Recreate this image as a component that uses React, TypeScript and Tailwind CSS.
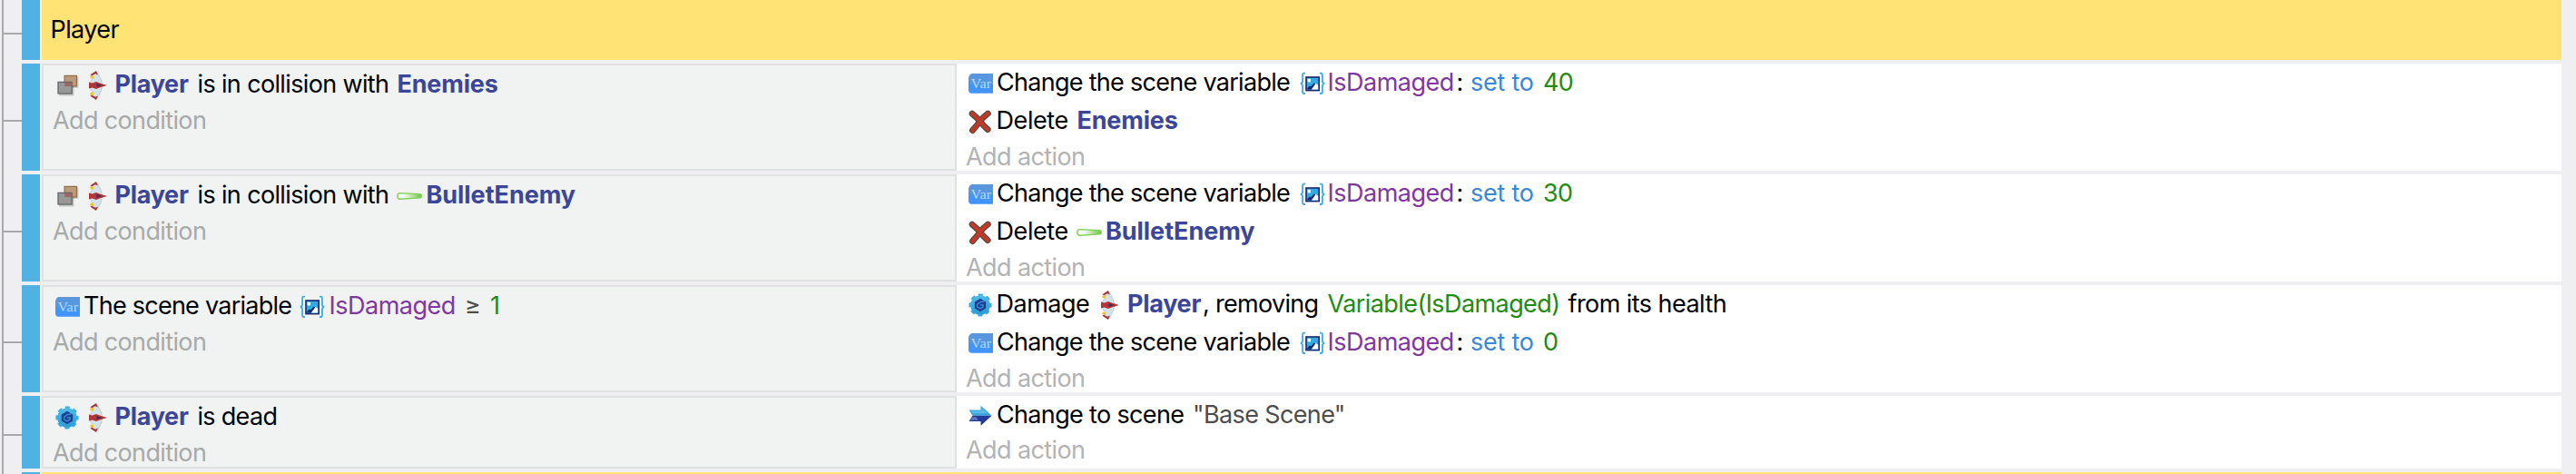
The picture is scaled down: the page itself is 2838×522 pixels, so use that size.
import type { ReactNode } from 'react';

function Text({ className, children }: { className: string; children: ReactNode }) {
  return <span className={`block shrink-0 pt-[2px] whitespace-pre ${className}`}>{children}</span>;
}

const BLACK = 'text-black';
const OBJECT = 'font-bold text-[#3c4698]';
const VARIABLE = 'text-[#8038a0]';
const NUMBER = 'text-[#228b10]';
const OPERATOR = 'text-[#3c87d4]';
const STRING = 'text-[#4d4d4d]';

function CollisionIcon() {
  return (
    <svg viewBox="0 0 28 28" className="mt-1 size-7 shrink-0">
      <rect x="12" y="4.5" width="14.5" height="12.5" fill="#000" opacity="0.14" />
      <rect x="5" y="11.5" width="16.5" height="14" fill="#000" opacity="0.18" />
      <rect x="11.1" y="3.4" width="13.4" height="11.6" fill="#bd9a77" stroke="#8e6c4b" strokeWidth="1.2" />
      <rect x="4" y="10.4" width="15.2" height="12.6" fill="#989898" stroke="#666" strokeWidth="1.3" />
      <rect x="11.3" y="11" width="7.4" height="4" fill="#9c6668" />
    </svg>
  );
}

function ShipIcon({ className }: { className: string }) {
  return (
    <svg viewBox="0 0 20 32" className={`mt-1 h-8 w-5 shrink-0 ${className}`}>
      <path d="M3 4.5 L9 1.5 L11.5 6 Q14 10 14.4 14 V18 Q14 22 11.5 26 L9 30.5 L3 27.5 L4.4 24 L1 19 V13 L4.4 8 Z" fill="#d3e2e8" stroke="#a3b3b9" strokeWidth="0.6" />
      <path d="M1.4 4.2 L8 0 L9.8 4.4 L7 3.2 L3.2 5.2 Z M1.4 27.8 L8 32 L9.8 27.6 L7 28.8 L3.2 26.8 Z" fill="#a6343a" />
      <path d="M1.2 5.4 L4.8 5 L5.4 8 L1.6 8.4 Z M1.2 26.6 L4.8 27 L5.4 24 L1.6 23.6 Z" fill="#f2c32e" />
      <path d="M0 12.6 L3.6 13.4 L8 12 L12.5 13.8 L20 16 L12.5 18.2 L8 20 L3.6 18.6 L0 19.4 Z" fill="#b0343a" />
      <path d="M8.5 14 L14.5 16 L8.5 18 Z" fill="#463052" />
    </svg>
  );
}

function VarIcon() {
  return (
    <svg viewBox="0 0 28 28" className="mt-1 size-7 shrink-0">
      <defs>
        <linearGradient id="var-fill" x1="0" y1="0" x2="0" y2="1">
          <stop offset="0" stopColor="#5b96db" />
          <stop offset="0.5" stopColor="#5299e3" />
          <stop offset="0.58" stopColor="#4496f5" />
          <stop offset="1" stopColor="#3f93fb" />
        </linearGradient>
      </defs>
      <path d="M4.5 3 H28 V24.7 H4.5 Q1 24.7 1 21 V8 Q1.6 4 4.5 3 Z" fill="url(#var-fill)" />
      <text x="3.6" y="18.8" textLength="22.5" lengthAdjust="spacingAndGlyphs" fontFamily="'Liberation Serif', serif" fontSize="15.5" letterSpacing="0" fill="#b9d5f6">
        Var
      </text>
    </svg>
  );
}

function SceneVariableIcon({ className }: { className: string }) {
  return (
    <svg viewBox="0 0 28 28" className={`mt-1 size-7 shrink-0 ${className}`}>
      <g fill="none" stroke="#38aee2" strokeWidth="1.8">
        <path d="M6 2.6 H4.6 Q3.1 2.6 3.1 4.6 V11 Q3.1 13.6 0.8 13.9 Q3.1 14.2 3.1 17 V23 Q3.1 25 4.6 25 H6" />
        <path d="M22 2.6 H23.4 Q24.9 2.6 24.9 4.6 V11 Q24.9 13.6 27.2 13.9 Q24.9 14.2 24.9 17 V23 Q24.9 25 23.4 25 H22" />
      </g>
      <rect x="7" y="7" width="14.2" height="14.6" fill="#35a9e0" stroke="#17266f" strokeWidth="1.6" />
      <rect x="8.6" y="8.8" width="3.4" height="3.6" fill="#fff" />
      <path d="M13 20.6 L17.3 13.8 L20.2 15.8 V20.6 Z" fill="#fff" />
      <path d="M8.3 20.6 V19 L11 16.6 L12.3 17.2 L15.8 13.6 L17.2 14.4 L12.6 20.6 Z" fill="#17266f" />
    </svg>
  );
}

function DeleteIcon() {
  return (
    <svg viewBox="0 0 28 28" className="mt-1 size-7 shrink-0">
      <path d="M5 5.2 Q10.5 9.5 14 14 Q17.5 18.5 22.2 22.6 M22.4 5 Q17 9 13.6 13.8 Q10 18.5 5.4 23.6" fill="none" stroke="#5c4a42" strokeWidth="6.8" strokeLinecap="round" />
      <path d="M5 5.2 Q10.5 9.5 14 14 Q17.5 18.5 22.2 22.6 M22.4 5 Q17 9 13.6 13.8 Q10 18.5 5.4 23.6" fill="none" stroke="#c03a2a" strokeWidth="4.2" strokeLinecap="round" />
    </svg>
  );
}

function GearIcon() {
  return (
    <svg viewBox="0 0 28 28" className="mt-1 size-7 shrink-0">
      <defs>
        <linearGradient id="gear-fill" x1="0" y1="0" x2="0" y2="1">
          <stop offset="0" stopColor="#4fbce8" />
          <stop offset="1" stopColor="#2b9bd3" />
        </linearGradient>
      </defs>
      <circle cx="14" cy="14" r="11.3" fill="none" stroke="#3fade0" strokeWidth="2.6" strokeDasharray="5 3.875" strokeDashoffset="2.5" />
      <circle cx="14" cy="14" r="10.8" fill="url(#gear-fill)" />
      <path d="M14 6.8 L20.2 10.4 V17.6 L14 21.2 L7.8 17.6 V10.4 Z" fill="#1d3f95" />
      <path d="M18.6 9.8 L14.2 10.6 L10.8 13 V16.2 L14 17.8 L17 16 V13.8 H14" fill="none" stroke="#3f97d6" strokeWidth="1.2" />
    </svg>
  );
}

function ArrowIcon() {
  return (
    <svg viewBox="0 0 28 28" className="mt-1 size-7 shrink-0">
      <path d="M1.5 7.5 H14.5 V2.8 L26.6 13.8 H5.5 Z" fill="#3aa3da" />
      <path d="M5.5 13.8 H26.6 L14.5 24.8 V20 H1.5 Z" fill="#253a96" />
      <path d="M3 8.6 H15.6 V5.4 L22 11.2 H6 Z" fill="#5abdec" />
      <path d="M5 15.5 L3 18.8 H12 L9 15 Z" fill="#5a78c4" />
    </svg>
  );
}

function BulletIcon({ className }: { className: string }) {
  return (
    <svg viewBox="0 0 28 28" className={`mt-1 size-7 shrink-0 ${className}`}>
      <defs>
        <linearGradient id="bullet-fill" x1="0" y1="0" x2="1" y2="0">
          <stop offset="0" stopColor="#ffffff" />
          <stop offset="0.35" stopColor="#eaf8e2" />
          <stop offset="1" stopColor="#6cc53f" />
        </linearGradient>
      </defs>
      <path d="M4 10.6 L26 11.7 Q27.3 11.8 27.3 13.8 Q27.3 15.8 26 15.9 L4 17.2 Q0.8 17 0.8 13.9 Q0.8 10.8 4 10.6 Z" fill="url(#bullet-fill)" stroke="#83d05c" strokeWidth="1.4" />
    </svg>
  );
}

function Line({ className, children }: { className: string; children: ReactNode }) {
  return <div className={`flex items-center ${className}`}>{children}</div>;
}

function SetVariable({ value }: { value: string }) {
  return (
    <Line className="h-[40px]">
      <VarIcon />
      <Text className={`ml-[4px] w-[334px] tracking-[-0.71px] ${BLACK}`}>Change the scene variable</Text>
      <SceneVariableIcon className="" />
      <Text className={`ml-[2.5px] w-[142px] tracking-[-0.5px] ${VARIABLE}`}>IsDamaged</Text>
      <Text className={`w-[15.5px] ${BLACK}`}>:</Text>
      <Text className={`w-[80px] tracking-[-0.25px] ${OPERATOR}`}>set to</Text>
      <Text className={`tracking-[-0.6px] ${NUMBER}`}>{value}</Text>
    </Line>
  );
}

function PlayerSubject() {
  return (
    <>
      <ShipIcon className="ml-[10px]" />
      <Text className={`ml-[8.5px] w-[91px] tracking-[-0.3px] ${OBJECT}`}>Player</Text>
    </>
  );
}

function AddAction() {
  return (
    <Line className="h-[38px]">
      <Text className="-ml-[2px] tracking-[-0.6px] text-[#b3b3b3]">Add action</Text>
    </Line>
  );
}

function Rail({ offset }: { offset: string }) {
  return (
    <div className={`w-[22px] shrink-0 border-l-2 border-[#a9a9ab] ${offset}`}>
      <div className="h-[2px] bg-[#a9a9ab]" />
    </div>
  );
}

type EventProps = { height: string; offset: string; condition: ReactNode; children: ReactNode };

function EventRow({ height, offset, condition, children }: EventProps) {
  return (
    <div className={`flex ${height}`}>
      <Rail offset={offset} />
      <div className="mb-1 w-5 shrink-0 bg-[#51b1e2]" />
      <div className="mb-1 ml-[2px] flex flex-1 bg-white">
        <div className="w-[1008px] shrink-0 border-2 border-[#e0e2e1] bg-[#f0f3f2] pl-3">
          <Line className="h-[40px]">{condition}</Line>
          <Line className="h-[39px]">
            <Text className="-ml-[2px] tracking-[-0.63px] text-[#a8aaa9]">Add condition</Text>
          </Line>
        </div>
        <div className="flex-1 pl-3">{children}</div>
      </div>
    </div>
  );
}

export default function App() {
  return (
    <div className="h-[522px] w-[2838px] overflow-hidden bg-[#efeff2] pr-4 pl-[2px] font-['Inter',sans-serif] text-[27px] leading-[32px]">
      <div className="flex h-[70px]">
        <Rail offset="pt-9" />
        <div className="mb-1 w-5 shrink-0 bg-[#51b1e2]" />
        <div className="mb-1 ml-[2px] flex flex-1 items-center bg-[#ffe375] pb-[2px] pl-[9.5px]">
          <Text className={`tracking-[-0.6px] ${BLACK}`}>Player</Text>
        </div>
      </div>

      <EventRow
        height="h-[122px]"
        offset="pt-[62px]"
        condition={
          <>
            <CollisionIcon />
            <PlayerSubject />
            <Text className={`w-[220px] tracking-[-0.64px] ${BLACK}`}>is in collision with</Text>
            <Text className={`tracking-[-0.2px] ${OBJECT}`}>Enemies</Text>
          </>
        }
      >
        <SetVariable value="40" />
        <Line className="h-[43px]">
          <DeleteIcon />
          <Text className={`ml-[3.5px] w-[89px] tracking-[-0.42px] ${BLACK}`}>Delete</Text>
          <Text className={`tracking-[-0.2px] ${OBJECT}`}>Enemies</Text>
        </Line>
        <AddAction />
      </EventRow>

      <EventRow
        height="h-[122px]"
        offset="pt-[62px]"
        condition={
          <>
            <CollisionIcon />
            <PlayerSubject />
            <Text className={`w-[219px] tracking-[-0.64px] ${BLACK}`}>is in collision with</Text>
            <BulletIcon className="" />
            <Text className={`ml-[5px] tracking-[-0.05px] ${OBJECT}`}>BulletEnemy</Text>
          </>
        }
      >
        <SetVariable value="30" />
        <Line className="h-[43px]">
          <DeleteIcon />
          <Text className={`ml-[3.5px] w-[88.5px] tracking-[-0.42px] ${BLACK}`}>Delete</Text>
          <BulletIcon className="" />
          <Text className={`ml-[4px] tracking-[-0.05px] ${OBJECT}`}>BulletEnemy</Text>
        </Line>
        <AddAction />
      </EventRow>

      <EventRow
        height="h-[122px]"
        offset="pt-[62px]"
        condition={
          <>
            <VarIcon />
            <Text className={`ml-[4px] w-[238px] tracking-[-0.75px] ${BLACK}`}>The scene variable</Text>
            <SceneVariableIcon className="" />
            <Text className={`ml-[4.5px] w-[149.5px] tracking-[-0.5px] ${VARIABLE}`}>IsDamaged</Text>
            <Text className={`w-[28px] ${STRING}`}>≥</Text>
            <Text className={NUMBER}>1</Text>
          </>
        }
      >
        <Line className="h-[40px]">
          <GearIcon />
          <Text className={`ml-[3.5px] w-[114px] tracking-[-0.5px] ${BLACK}`}>Damage</Text>
          <ShipIcon className="ml-[1.5px]" />
          <Text className={`ml-[9px] w-[83px] tracking-[-0.3px] ${OBJECT}`}>Player</Text>
          <Text className={`w-[137.5px] tracking-[-0.7px] ${BLACK}`}>, removing</Text>
          <Text className={`w-[265px] tracking-[-0.58px] ${NUMBER}`}>Variable(IsDamaged)</Text>
          <Text className={`tracking-[-0.56px] ${BLACK}`}>from its health</Text>
        </Line>
        <div className="pt-[1.5px] pb-[1.5px]">
          <SetVariable value="0" />
        </div>
        <AddAction />
      </EventRow>

      <EventRow
        height="h-[84px]"
        offset="pt-[42px]"
        condition={
          <>
            <GearIcon />
            <PlayerSubject />
            <Text className={`tracking-[-0.7px] ${BLACK}`}>is dead</Text>
          </>
        }
      >
        <Line className="h-[40px]">
          <ArrowIcon />
          <Text className={`ml-[4px] w-[216px] tracking-[-0.66px] ${BLACK}`}>Change to scene</Text>
          <Text className={`tracking-[-0.63px] ${STRING}`}>"Base Scene"</Text>
        </Line>
        <AddAction />
      </EventRow>

      <div className="flex h-[2px]">
        <div className="w-[22px] shrink-0 border-l-2 border-[#a9a9ab]" />
        <div className="w-5 shrink-0 bg-[#51b1e2]" />
        <div className="ml-[2px] flex-1 bg-[#ffe375]" />
      </div>
    </div>
  );
}
